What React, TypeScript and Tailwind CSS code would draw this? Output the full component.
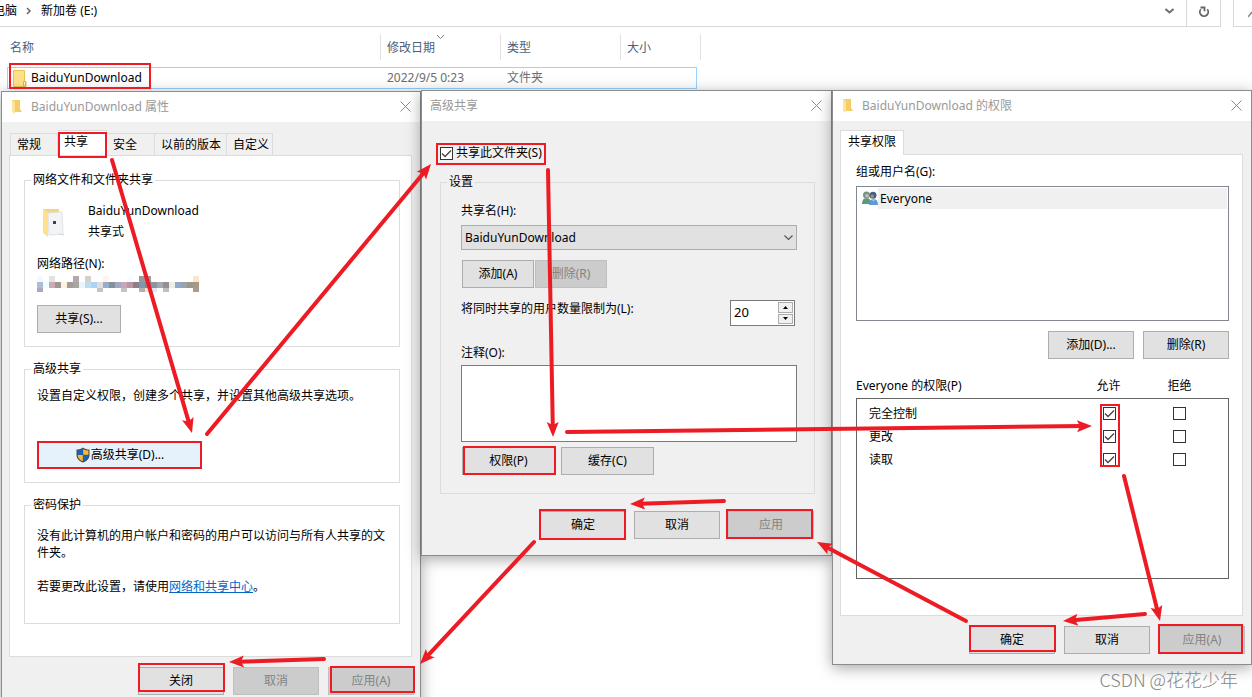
import { useId } from 'react'
import type { ReactNode } from 'react'
import { clsx } from 'clsx'

/* ---------- icons ---------- */

function FolderIcon() {
  return (
    <svg width="14" height="17" viewBox="0 0 14 17" aria-hidden="true">
      <path d="M.5.5h11v11h1.5v5H.5z" fill="#ffe08a" stroke="#e9c453" />
      <path d="M10.5 11.5h2v4.5h-2z" fill="#fff0bd" stroke="#e0b63f" />
    </svg>
  )
}

function SmallFolderIcon() {
  return (
    <svg width="10" height="14" viewBox="0 0 10 14" aria-hidden="true">
      <path d="M0 0h8v9l2 3H0z" fill="#f5cd67" />
      <path d="M0 0l3 2v12l-3-2z" fill="#ffe399" />
    </svg>
  )
}

function SharedFolderIcon() {
  return (
    <svg width="24" height="30" viewBox="0 0 24 30" aria-hidden="true">
      <path d="M1 1h16v5H1z" fill="#f4d47c" />
      <path d="M6 5l14-1 1 22-14 1z" fill="#f3f4f6" stroke="#e1e3e6" />
      <path d="M1 1l5 3v25l-5-4z" fill="#ffe08c" />
      <rect x="11" y="13" width="3" height="3" fill="#39434c" />
      <path d="M17 26l5 1" stroke="#d5d5d5" />
    </svg>
  )
}

function ShieldIcon() {
  return (
    <svg width="16" height="16" viewBox="0 0 16 16" aria-hidden="true">
      <path d="M8 .5C6 2 4 2.500 1.500 2.500V8c0 3.500 2.500 6 6.500 7.500 4-1.500 6.500-4 6.500-7.500V2.500C12 2.500 10 2 8 .5z" fill="#4c4c4c" />
      <path d="M7.800 2.200C6 3 4.500 3.500 2.600 3.600V7.800h5.200z" fill="#0f67c9" />
      <path d="M8.200 2.200c1.800.8 3.300 1.300 5.200 1.400v4.200H8.200z" fill="#fdb934" />
      <path d="M2.600 8h5.200v6.300C4.600 13 2.800 11 2.600 8z" fill="#fdb934" />
      <path d="M8.200 8h5.200c-.2 3-2 5-5.200 6.300z" fill="#0f67c9" />
    </svg>
  )
}

function GroupIcon() {
  return (
    <svg width="16" height="15" viewBox="0 0 16 15" aria-hidden="true">
      <path d="M0 13c0-4 1.500-6 4.500-6S9 9 9 13z" fill="#5a9a78" />
      <circle cx="4.500" cy="4" r="3.500" fill="#7f8f88" />
      <circle cx="5" cy="4.800" r="1.800" fill="#b9c6bf" />
      <path d="M7 14c0-4 1.500-6 4.500-6s4.500 2 4.500 6z" fill="#5b9bd5" />
      <path d="M10 8.500l1.500 2 1.500-2z" fill="#b9d7f0" />
      <circle cx="11" cy="4.300" r="3.500" fill="#4a5f7d" />
      <circle cx="10.300" cy="5.200" r="1.600" fill="#a88d84" />
    </svg>
  )
}

function CloseIcon() {
  return (
    <svg width="11" height="11" viewBox="0 0 11 11" aria-hidden="true">
      <path d="M.5.5l10 10M10.500.5l-10 10" stroke="#8a8a8a" />
    </svg>
  )
}

function RefreshIcon() {
  return (
    <svg width="12" height="12" viewBox="0 0 12 12" fill="none" aria-hidden="true">
      <path d="M2.800 3.300A4.200 4.200 0 1 0 9.300 3.300" stroke="#666" strokeWidth="1.800" />
      <path d="M2.500 1.500h4v3.800" stroke="#666" strokeWidth="1.800" />
    </svg>
  )
}

/* ---------- controls ---------- */

interface WinButtonProps {
  children: ReactNode
  className?: string
  disabled?: boolean
}

function WinButton({ children, className = 'w-[86px]', disabled }: WinButtonProps) {
  return (
    <button
      type="button"
      disabled={disabled}
      className={clsx(
        'flex h-7 items-center justify-center border',
        disabled
          ? 'border-[#bfbfbf] bg-[#cccccc] text-[#838383]'
          : 'border-[#adadad] bg-[#e1e1e1]',
        className
      )}
    >
      {children}
    </button>
  )
}

interface CheckBoxProps {
  id?: string
  label?: string
  checked?: boolean
}

function CheckBox({ id, label, checked }: CheckBoxProps) {
  return (
    <span className="inline-grid size-[13px]">
      <input
        id={id}
        type="checkbox"
        aria-label={label}
        defaultChecked={checked}
        className="peer col-start-1 row-start-1 size-[13px] appearance-none border border-[#333333] bg-white"
      />
      <svg
        viewBox="0 0 13 13"
        className="pointer-events-none invisible col-start-1 row-start-1 size-[13px] peer-checked:visible"
        aria-hidden="true"
      >
        <path d="M2 6.500l3 3 6-6" fill="none" stroke="#444" strokeWidth="1.300" />
      </svg>
    </span>
  )
}

interface DialogProps {
  title: string
  icon?: ReactNode
  className: string
  children: ReactNode
}

function Dialog({ title, icon, className, children }: DialogProps) {
  return (
    <section
      className={clsx(
        'flex min-w-0 flex-col border border-[#8c8c8c] bg-[#f0f0f0] shadow-[0_3px_14px_rgba(0,0,0,0.35)]',
        className
      )}
    >
      <header className="flex h-[30px] items-center bg-white pr-[9px] pl-2 text-[#999999]">
        {icon && <span className="w-[21px] pl-[2px]">{icon}</span>}
        <h2 className="flex-1">{title}</h2>
        <button type="button" aria-label="关闭" className="pb-[2px]">
          <CloseIcon />
        </button>
      </header>
      {children}
    </section>
  )
}

interface GroupProps {
  title: string
  className?: string
  children: ReactNode
}

function Group({ title, className, children }: GroupProps) {
  return (
    <fieldset className={clsx('min-w-0 border border-[#dcdcdc]', className)}>
      <legend className="ml-[6px] px-[2px]">{title}</legend>
      {children}
    </fieldset>
  )
}

/* ---------- explorer ---------- */

function Explorer() {
  return (
    <div className="h-[90px] bg-white">
      <div className="flex h-[27px] gap-3">
        <div className="flex flex-1 border-r border-b border-[#d9d9d9]">
          <nav className="-ml-[7px] flex flex-1 items-center pb-1">
            <span>电脑</span>
            <svg width="6" height="8" viewBox="0 0 6 8" className="mx-[9px]" aria-hidden="true">
              <path d="M1 1l3 3-3 3" fill="none" stroke="#666" strokeWidth="1.500" />
            </svg>
            <span>新加卷 (E:)</span>
          </nav>
          <button type="button" aria-label="展开" className="px-3 pb-1">
            <svg width="9" height="6" viewBox="0 0 9 6" aria-hidden="true">
              <path d="M.5 1l4 3.500 4-3.500" fill="none" stroke="#707070" strokeWidth="2" />
            </svg>
          </button>
          <button
            type="button"
            aria-label="刷新"
            className="flex w-[34px] items-center justify-center border-l border-[#d9d9d9] pb-[3px]"
          >
            <RefreshIcon />
          </button>
        </div>
        <div className="flex w-[19px] items-center justify-end overflow-hidden border-b border-l border-[#d9d9d9]">
          <svg width="4" height="9" viewBox="0 0 4 9" aria-hidden="true">
            <path d="M0 8l4-5" stroke="#9c8290" strokeWidth="1.500" />
          </svg>
        </div>
      </div>

      <table className="mt-[7px] ml-[7px] w-[694px] table-fixed border-separate border-spacing-0 text-left">
        <colgroup>
          <col className="w-[374px]" />
          <col className="w-[120px]" />
          <col className="w-[120px]" />
          <col className="w-[76px]" />
          <col className="w-1" />
        </colgroup>
        <thead className="text-[#4c607a]">
          <tr>
            <th className="p-0 pb-[7px] font-normal">
              <div className="flex h-[26px] items-center border-r border-[#e2e2e2] pt-[2px] pl-[3px]">名称</div>
            </th>
            <th className="p-0 pb-[7px] font-normal">
              <div className="relative flex h-[26px] items-center border-r border-[#e2e2e2] pt-[2px] pl-[6px]">
                修改日期
                <svg width="7" height="4" viewBox="0 0 7 4" className="absolute top-px left-14" aria-hidden="true">
                  <path d="M0 0l3.500 3.500L7 0" fill="none" stroke="#808080" />
                </svg>
              </div>
            </th>
            <th className="p-0 pb-[7px] font-normal">
              <div className="flex h-[26px] items-center border-r border-[#e2e2e2] pt-[2px] pl-[6px]">类型</div>
            </th>
            <th className="p-0 pb-[7px] font-normal">
              <div className="flex h-[26px] items-center pt-[2px] pl-[6px]">大小</div>
            </th>
            <th className="p-0 pb-[7px]">
              <div className="h-[26px] border-r border-[#e2e2e2]" />
            </th>
          </tr>
        </thead>
        <tbody className="text-[#6d6d6d]">
          <tr className="h-[22px]">
            <td className="border-y border-l border-[#99d1ff] p-0 text-black">
              <div className="flex items-center gap-1 pl-[5px]">
                <FolderIcon />
                BaiduYunDownload
              </div>
            </td>
            <td className="border-y border-[#99d1ff] p-0 pl-[6px]">2022/9/5 0:23</td>
            <td className="border-y border-[#99d1ff] p-0 pl-[6px]">文件夹</td>
            <td className="border-y border-r border-[#99d1ff] p-0" />
          </tr>
        </tbody>
      </table>
    </div>
  )
}

/* ---------- properties dialog ---------- */

// each row is a list of [column, colour] cells, 6px wide
const MOSAIC: [number, string][][] = [
  [
    [0, '#f0faff'], [2, '#dbe5e2'], [6, '#b0aaac'], [8, '#d9cfc6'], [11, '#fff3ec'],
    [15, '#f5fdff'], [17, '#999999'], [18, '#a09a9a'], [26, '#ffe4cc'],
  ],
  [
    [0, '#b0bcd2'], [1, '#f0fdff'], [2, '#cda9b4'], [3, '#a09494'], [4, '#fff3dc'],
    [5, '#a09d9c'], [6, '#a9a5a2'], [7, '#e8f5ff'], [8, '#bddcf2'], [9, '#add3f0'],
    [10, '#e0dde2'], [11, '#9aabcc'], [12, '#81929d'], [13, '#a2a8cb'], [14, '#c8a7b3'],
    [15, '#b897a2'], [16, '#8b8088'], [17, '#8098ab'], [18, '#8a8a90'], [19, '#8c96a0'],
    [20, '#a4a8b0'], [21, '#948f95'], [22, '#e8f0e2'], [23, '#95a8c8'], [24, '#98a3ab'],
    [25, '#9c9a86'], [26, '#a69a82'],
  ],
  [
    [0, '#a9aabb'], [10, '#c9bfcb'], [14, '#c9bfc8'], [17, '#b7b0a8'], [18, '#f5dfcf'],
    [19, '#dceaf4'], [21, '#c5bcc6'], [26, '#ab9c91'],
  ],
]

function Mosaic() {
  return (
    <svg width="162" height="16" viewBox="0 0 162 16" aria-hidden="true">
      {MOSAIC.map((row, r) =>
        row.map(([col, fill]) => (
          <rect key={`${r}-${col}`} x={col * 6} y={r * 6} width="6" height="6" fill={fill} />
        ))
      )}
    </svg>
  )
}

const TABS = [
  { label: '常规', width: 'w-[48px]' },
  { label: '共享', width: 'w-[49px]' },
  { label: '安全', width: 'w-[48px]' },
  { label: '以前的版本', width: 'w-[72px]' },
  { label: '自定义', width: 'w-[46px]' },
]

function PropertiesDialog() {
  return (
    <Dialog title="BaiduYunDownload 属性" icon={<SmallFolderIcon />} className="mt-px ml-px flex-[420_1_0]">
      <div className="pt-2 pr-[6px] pb-[11px] pl-[7px]">
        <div role="tablist" className="flex items-end pl-px">
          {TABS.map(({ label, width }) => (
            <button
              key={label}
              type="button"
              role="tab"
              aria-selected={label === '共享'}
              className={clsx(
                'border-t border-r border-[#dcdcdc] pl-[6px] text-left whitespace-nowrap first:border-l',
                label === '共享' ? 'h-[25px] bg-white pb-[2px]' : 'h-[22px]',
                width
              )}
            >
              {label}
            </button>
          ))}
        </div>

        <div className="mr-[2px] h-[502px] border border-[#dcdcdc] bg-white pt-4 pr-[11px] pl-[14px]">
          <Group title="网络文件和文件夹共享" className="h-[175px]">
            <div className="flex flex-col items-start pt-3 pl-3">
              <div className="flex gap-[22px] pl-[5px]">
                <div className="pt-2">
                  <SharedFolderIcon />
                </div>
                <div className="leading-[21px]">
                  <p>BaiduYunDownload</p>
                  <p>共享式</p>
                </div>
              </div>
              <p className="mt-[14px] mb-1">网络路径(N):</p>
              <Mosaic />
              <WinButton className="mt-[13px] w-[84px]">共享(S)...</WinButton>
            </div>
          </Group>

          <Group title="高级共享" className="mt-[14px] h-[122px]">
            <div className="pt-[11px] pl-3">
              <p>设置自定义权限，创建多个共享，并设置其他高级共享选项。</p>
              <button
                type="button"
                className="mt-[37px] flex h-7 w-[165px] items-center justify-center bg-[#e5f1fb]"
              >
                <ShieldIcon />
                高级共享(D)...
              </button>
            </div>
          </Group>

          <Group title="密码保护" className="mt-[14px] h-[127px]">
            <div className="pt-[14px] pr-3 pl-3 leading-[17px]">
              <p>没有此计算机的用户帐户和密码的用户可以访问与所有人共享的文件夹。</p>
              <p className="mt-[17px]">
                若要更改此设置，请使用
                <a href="#network" className="text-[#0066cc] underline">网络和共享中心</a>。
              </p>
            </div>
          </Group>
        </div>

        <div className="mt-[10px] flex justify-end gap-[9px]">
          <WinButton>关闭</WinButton>
          <WinButton disabled>取消</WinButton>
          <WinButton disabled>应用(A)</WinButton>
        </div>
      </div>
    </Dialog>
  )
}

/* ---------- advanced sharing dialog ---------- */

function AdvancedDialog() {
  const id = useId()

  return (
    <Dialog title="高级共享" className="flex-[411_1_0]">
      <div className="pt-6 pr-4 pb-4 pl-[18px]">
        <div className="flex items-center gap-[3px]">
          <CheckBox id={`${id}-share`} checked />
          <label htmlFor={`${id}-share`}>共享此文件夹(S)</label>
        </div>

        <Group title="设置" className="mt-[13px] h-[320px]">
          <div className="pt-[13px] pr-[17px] pl-5">
            <label htmlFor={`${id}-name`} className="block">共享名(H):</label>
            <div className="mt-[6px] grid">
              <select
                id={`${id}-name`}
                className="col-start-1 row-start-1 h-[25px] appearance-none border border-[#adadad] bg-[#e1e1e1] pl-[3px]"
              >
                <option>BaiduYunDownload</option>
              </select>
              <svg
                width="9"
                height="6"
                viewBox="0 0 9 6"
                className="pointer-events-none col-start-1 row-start-1 mr-1 self-center justify-self-end"
                aria-hidden="true"
              >
                <path d="M.5.5l4 4 4-4" fill="none" stroke="#555" strokeWidth="1.200" />
              </svg>
            </div>
            <div className="mt-[10px] flex gap-px pl-px">
              <WinButton className="w-[72px]">添加(A)</WinButton>
              <WinButton className="w-[72px]" disabled>删除(R)</WinButton>
            </div>

            <div className="mt-3 flex items-start justify-between pr-[2px]">
              <label htmlFor={`${id}-limit`} className="pt-px">将同时共享的用户数量限制为(L):</label>
              <div className="flex h-[26px] w-[65px] border border-[#7a7a7a] bg-white">
                <input
                  id={`${id}-limit`}
                  type="text"
                  defaultValue="20"
                  className="min-w-0 flex-1 pb-[2px] pl-[3px] text-[13px] outline-none"
                />
                <div className="flex w-[17px] flex-col gap-px p-px">
                  <button
                    type="button"
                    aria-label="增加"
                    className="flex flex-1 items-center justify-center border border-[#adadad] bg-[#f0f0f0]"
                  >
                    <svg width="5" height="3" viewBox="0 0 5 3" aria-hidden="true">
                      <path d="M0 3L2.500 0 5 3z" />
                    </svg>
                  </button>
                  <button
                    type="button"
                    aria-label="减少"
                    className="flex flex-1 items-center justify-center border border-[#adadad] bg-[#f0f0f0]"
                  >
                    <svg width="5" height="3" viewBox="0 0 5 3" aria-hidden="true">
                      <path d="M0 0l2.500 3L5 0z" />
                    </svg>
                  </button>
                </div>
              </div>
            </div>

            <label htmlFor={`${id}-note`} className="mt-[19px] mb-1 block">注释(O):</label>
            <textarea
              id={`${id}-note`}
              className="block h-[77px] w-full resize-none border border-[#7a7a7a] bg-white"
            />
            <div className="mt-[5px] flex gap-[6px] pl-px">
              <WinButton className="w-[93px]">权限(P)</WinButton>
              <WinButton className="w-[93px]">缓存(C)</WinButton>
            </div>
          </div>
        </Group>

        <div className="mt-[17px] flex justify-end gap-2 pr-px">
          <WinButton>确定</WinButton>
          <WinButton>取消</WinButton>
          <WinButton disabled>应用</WinButton>
        </div>
      </div>
    </Dialog>
  )
}

/* ---------- permissions dialog ---------- */

const PERMISSIONS = ['完全控制', '更改', '读取']

function PermissionsDialog() {
  return (
    <Dialog title="BaiduYunDownload 的权限" icon={<SmallFolderIcon />} className="flex-[420_1_0]">
      <div className="pt-[9px] pb-[10px] pl-[7px]">
        <div role="tablist" className="flex">
          <button
            type="button"
            role="tab"
            aria-selected
            className="-mb-px h-[25px] w-16 border border-b-0 border-[#dcdcdc] bg-white pb-[2px]"
          >
            共享权限
          </button>
        </div>

        <div className="mr-2 h-[462px] border border-[#dcdcdc] bg-white pt-[9px] pr-[13px] pl-[15px]">
          <p>组或用户名(G):</p>
          <ul className="mt-[6px] h-[135px] border border-[#828790] p-px pl-[5px]">
            <li className="flex h-[21px] items-center">
              <GroupIcon />
              <span className="flex h-full flex-1 items-center bg-[#f0f0f0] pl-[2px]">Everyone</span>
            </li>
          </ul>
          <div className="mt-[10px] flex justify-end gap-[9px]">
            <WinButton>添加(D)...</WinButton>
            <WinButton>删除(R)</WinButton>
          </div>

          <div className="mt-[19px] flex pr-[14px]">
            <span className="flex-1">Everyone 的权限(P)</span>
            <span className="w-[71px] text-center">允许</span>
            <span className="w-[71px] text-center">拒绝</span>
          </div>
          <div className="mt-1 h-[181px] border border-[#646464] pt-[3px] pr-[14px] pl-3">
            <table className="w-full table-fixed border-collapse">
              <tbody>
                {PERMISSIONS.map((name) => (
                  <tr key={name} className="h-[23px]">
                    <td className="p-0">{name}</td>
                    <td className="w-[70px] p-0">
                      <div className="flex justify-center">
                        <CheckBox label={`${name} 允许`} checked />
                      </div>
                    </td>
                    <td className="w-[70px] p-0">
                      <div className="flex justify-center">
                        <CheckBox label={`${name} 拒绝`} />
                      </div>
                    </td>
                  </tr>
                ))}
              </tbody>
            </table>
          </div>
        </div>

        <div className="mt-[10px] flex justify-end gap-[9px] pr-[6px]">
          <WinButton>确定</WinButton>
          <WinButton>取消</WinButton>
          <WinButton disabled>应用(A)</WinButton>
        </div>
      </div>
    </Dialog>
  )
}

/* ---------- red marks over the dialogs ---------- */

// x1, y1, x2, y2 with the head on the second point
const ARROWS = [
  [112, 160, 192, 433],
  [207, 434, 431, 164],
  [548, 170, 553, 437],
  [567, 432, 1092, 426],
  [1124, 476, 1160, 621],
  [1145, 614, 1063, 621],
  [966, 621, 817, 542],
  [724, 501, 630, 504],
  [534, 542, 420, 664],
  [324, 659, 229, 662],
]

// left, top, right, bottom
const FRAMES = [
  [9, 63, 151, 89],
  [58, 132, 107, 158],
  [436, 143, 546, 165],
  [37, 441, 202, 469],
  [463, 446, 556, 475],
  [539, 509, 626, 540],
  [726, 509, 813, 539],
  [1100, 404, 1120, 467],
  [969, 625, 1056, 652],
  [1158, 624, 1243, 654],
  [138, 663, 225, 692],
  [330, 666, 415, 693],
]

function Arrow({ points: [x1, y1, x2, y2] }: { points: number[] }) {
  const len = Math.hypot(x2 - x1, y2 - y1)
  const ux = (x2 - x1) / len
  const uy = (y2 - y1) / len
  const at = (back: number, side: number) =>
    `${x2 - ux * back - uy * side},${y2 - uy * back + ux * side}`

  return (
    <g>
      <line x1={x1} y1={y1} x2={x2 - ux * 10} y2={y2 - uy * 10} strokeWidth="4" strokeLinecap="round" />
      <polygon points={[at(0, 0), at(15, 6), at(12, 0), at(15, -6)].join(' ')} stroke="none" />
    </g>
  )
}

function Marks() {
  return (
    <svg
      viewBox="0 0 1252 697"
      preserveAspectRatio="none"
      className="pointer-events-none absolute top-0 left-0 h-[697px] w-full"
      fill="#ed1c24"
      stroke="#ed1c24"
      aria-hidden="true"
    >
      {FRAMES.map(([l, t, r, b]) => (
        <rect key={`${l}-${t}`} x={l + 1} y={t + 1} width={r - l - 2} height={b - t - 2} fill="none" strokeWidth="2" />
      ))}
      {ARROWS.map((points) => (
        <Arrow key={points.join()} points={points} />
      ))}
    </svg>
  )
}

export default function App() {
  return (
    <main className="relative h-screen overflow-hidden bg-white font-['Noto_Sans','Noto_Sans_CJK_SC',sans-serif] text-xs leading-4 text-black">
      <Explorer />
      <div className="flex items-start">
        <PropertiesDialog />
        <AdvancedDialog />
        <PermissionsDialog />
      </div>
      <Marks />
      <p className="absolute right-[14px] bottom-1 font-['Noto_Sans_CJK_SC',sans-serif] text-lg leading-7 font-light text-[#868686]">
        CSDN @花花少年
      </p>
    </main>
  )
}
